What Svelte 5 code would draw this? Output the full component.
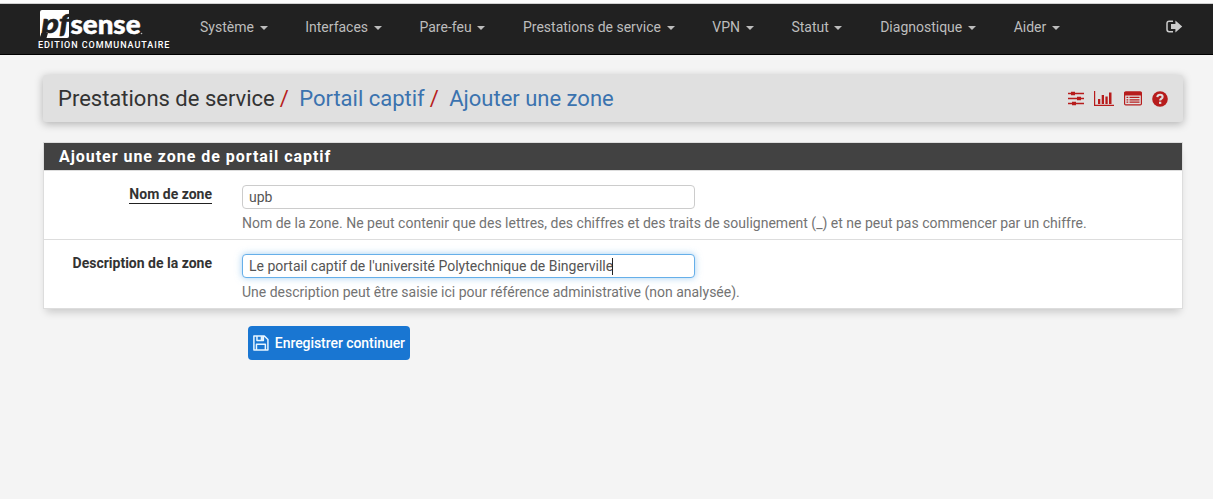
<script>
  const menu = ['Système', 'Interfaces', 'Pare-feu', 'Prestations de service', 'VPN', 'Statut', 'Diagnostique', 'Aider'];
  let zone = $state('upb');
  let description = $state("Le portail captif de l'université Polytechnique de Bingerville");
</script>

<div class="page">
  <header>
    <div class="brand">
      <svg class="logo" width="104" height="30" viewBox="0 0 104 30">
        <path d="M2 0H29V26Q29 28 27 28H6.5L8 23H1.5L0 27V2Q0 0 2 0Z" fill="#fff" />
        <text class="pf" x="1.5" y="23" textLength="28" lengthAdjust="spacingAndGlyphs">pf</text>
        <text class="sense" x="30.5" y="23.5" textLength="70" lengthAdjust="spacingAndGlyphs">sense</text>
        <circle cx="101.5" cy="23.5" r=".8" fill="#bbb" />
      </svg>
      <span class="edition">EDITION COMMUNAUTAIRE</span>
    </div>
    <nav>
      {#each menu as item}
        <a href="#top"><span>{item}</span><i class="caret"></i></a>
      {/each}
    </nav>
    <svg class="logout" width="17" height="14" viewBox="0 0 17 14">
      <path d="M7 1.2H3.2Q1 1.2 1 3.4V9.6Q1 11.8 3.2 11.8H7" fill="none" stroke="#ccc" stroke-width="1.5" />
      <path d="M5 4H9.4V.4L16.2 6.5L9.4 12.6V9H5Z" fill="#ccc" />
    </svg>
  </header>

  <main>
    <div class="crumbs">
      <h1>
        <span>Prestations de service</span><b>/</b><span class="link">Portail captif</span><b>/</b><span class="link">Ajouter une zone</span>
      </h1>
      <div class="tools">
        <svg width="16" height="15" viewBox="0 0 16 15">
          <path d="M0 2.5H16M0 7.5H16M0 12.5H16" stroke="#b71c1c" stroke-width="1.3" />
          <path d="M3 .7h4v3.6H3zM9 5.7h4v3.6H9zM4 10.7h4v3.6H4z" fill="#b71c1c" />
        </svg>
        <svg width="20" height="15" viewBox="0 0 20 15">
          <path d="M.6 0V14.4H20" fill="none" stroke="#b71c1c" stroke-width="1.2" />
          <path d="M4 8h2.3v5H4zM7.7 4H10v9H7.7zM11.4 5.5h2.3V13h-2.3zM15 1.5h2.5V13H15z" fill="#b71c1c" />
        </svg>
        <svg width="18" height="15" viewBox="0 0 18 15">
          <rect x=".6" y=".9" width="16.8" height="13" rx="1.2" fill="none" stroke="#b71c1c" stroke-width="1.2" />
          <path d="M.5 1h17v3.4H.5zM2.5 5.8h1.8v1.2H2.5zM5.5 5.8h10V7h-10zM2.5 8.2h1.8v1.2H2.5zM5.5 8.2h10v1.2h-10zM2.5 10.6h1.8v1.2H2.5zM5.5 10.6h10v1.2h-10z" fill="#b71c1c" />
        </svg>
        <svg width="16" height="16" viewBox="0 0 16 16">
          <circle cx="8" cy="8" r="7.8" fill="#b71c1c" />
          <path d="M5.3 6.1Q5.6 3.7 8.1 3.7Q10.6 3.7 10.6 5.9Q10.6 7.1 9.3 7.7Q8.1 8.3 8.1 9.6" fill="none" stroke="#e0e0e0" stroke-width="2.1" />
          <path d="M7 10.7h2.3v2.2H7z" fill="#e0e0e0" />
        </svg>
      </div>
    </div>

    <section class="panel">
      <h2>Ajouter une zone de portail captif</h2>
      <div class="row">
        <label for="zone"><span class="required">Nom de zone</span></label>
        <div class="field">
          <input id="zone" bind:value={zone} />
          <p>Nom de la zone. Ne peut contenir que des lettres, des chiffres et des traits de soulignement (_) et ne peut pas commencer par un chiffre.</p>
        </div>
      </div>
      <div class="row">
        <label for="description">Description de la zone</label>
        <div class="field">
          <div class="input focused" id="description" role="textbox" tabindex="0"><span>{description}</span><i class="cursor"></i></div>
          <p>Une description peut être saisie ici pour référence administrative (non analysée).</p>
        </div>
      </div>
    </section>

    <button>
      <svg width="16" height="16" viewBox="0 0 16 16">
        <path d="M.9.9H11.5L15.1 4.5V15.1H.9ZM4 1V5.5H10.5V1M3.5 15V9.3H12.5V15" fill="none" stroke="#e8f6ff" stroke-width="1.5" stroke-linejoin="round" />
        <path d="M7.8 1h2.2v4H7.8z" fill="#e8f6ff" />
      </svg>
      <span>Enregistrer continuer</span>
    </button>
  </main>
</div>

<style>
  :global(body) { margin: 0; background: #f4f4f4; }
  * { box-sizing: border-box; }
  .page { height: 499px; overflow: hidden; border-top: 3px solid #fbfbfb; font: 14px/20px Roboto, sans-serif; color: #333; }
  header { height: 52px; display: flex; align-items: flex-start; background: #212121; border-top: 1px solid #d0d0d0; border-bottom: 1px solid #000; padding: 0 30px 0 38px; }
  .brand { width: 162px; padding-top: 6px; display: flex; flex-direction: column; }
  .logo { display: block; margin-left: 2px; overflow: visible; }
  .pf { font: italic 900 26px/1 Lato, sans-serif; fill: #212121; stroke: #212121; stroke-width: .5px; }
  .sense { font: 900 27px/1 Lato, sans-serif; fill: #fff; stroke: #fff; stroke-width: .5px; }
  .edition { color: #fff; font-size: 9px; line-height: 10px; font-weight: 500; letter-spacing: .94px; white-space: nowrap; }
  nav { display: flex; gap: 37.7px; padding-top: 13px; }
  nav a { display: flex; align-items: center; gap: 5.7px; color: #bdbdbd; text-decoration: none; white-space: nowrap; }
  .caret { border: 4px solid transparent; border-top-color: #bdbdbd; border-bottom: 0; margin-top: 2px; }
  .logout { margin: 16px 0 0 auto; }
  main { padding: 20px 30px 0 43px; }
  .crumbs { height: 47px; background: #e0e0e0; border-radius: 3px; box-shadow: 0 2px 8px rgba(0,0,0,.28); display: flex; align-items: center; justify-content: space-between; padding: 0 15px; }
  h1 { margin: 0; font-size: 22px; line-height: 28px; font-weight: 400; display: flex; color: #333; white-space: nowrap; }
  h1 b { color: #b71c1c; font-weight: 400; margin: 0 10.3px 0 5px; }
  .link { color: #3b73af; }
  .tools { display: flex; align-items: center; gap: 10px; }
  .tools svg { display: block; }
  .panel { margin: 20px 0 0; width: 1140px; border: 1px solid #ddd; background: #fff; box-shadow: 0 6px 8px -3px rgba(0,0,0,.18); }
  h2 { height: 27px; margin: 0; padding: 0 15px; background: #424242; color: #fff; font-size: 16px; line-height: 28px; font-weight: 700; letter-spacing: .96px; }
  .row { height: 69px; border-top: 1px solid #ddd; display: flex; padding-top: 14px; }
  label { width: 168px; margin-top: -1px; text-align: right; font-weight: 700; }
  .required { display: inline-block; border-bottom: 1px solid #212121; line-height: 17px; }
  .field { margin-left: 30px; }
  input, .input { display: flex; align-items: center; width: 453px; height: 24px; border: 1px solid #ccc; border-radius: 4px; padding: 0 6px; background: #fff; color: #555; font: 14px Roboto, sans-serif; white-space: nowrap; }
  .focused { border-color: #66afe9; box-shadow: 0 0 7px rgba(102,175,233,.6); }
  .cursor { width: 1px; height: 17px; margin-left: -1px; background: #222; }
  p { margin: 4px 0 0; color: #737373; white-space: nowrap; }
  button { display: flex; align-items: center; gap: 6px; width: 162px; height: 34px; margin: 17px 0 0 205px; padding: 0 5px 1px; border: 0; border-radius: 4px; background: #1976d2; color: #fff; font: 500 14px Roboto, sans-serif; letter-spacing: -.06px; white-space: nowrap; }
  button svg { position: relative; top: .5px; }
</style>
